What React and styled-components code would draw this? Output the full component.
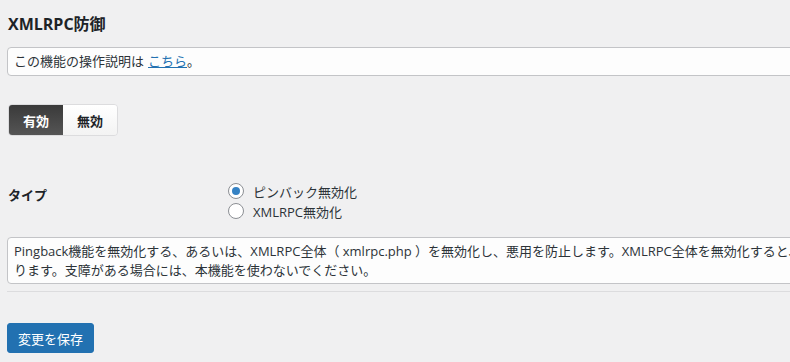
import React, { useState } from "react";
import styled, { createGlobalStyle } from "styled-components";

const GlobalStyle = createGlobalStyle`
  html, body {
    margin: 0;
    padding: 0;
    background: #f0f0f1;
    overflow: hidden;
  }
  body {
    font-family: "Open Sans", "Noto Sans CJK JP", sans-serif;
    color: #1d2327;
    font-size: 13px;
  }
`;

const Page = styled.div`
  width: 1100px;
  padding: 12px 0 0 7px;
  display: flex;
  flex-direction: column;
`;

const Title = styled.h2`
  margin: 0 0 11px 1px;
  font-size: 16px;
  line-height: 24px;
  font-weight: 700;
  color: #1d2327;
`;

const Note = styled.div`
  background: #fdfdfd;
  border: 1px solid #c3c4c7;
  border-radius: 4px;
  padding: 4px 6px;
  line-height: 19px;
  font-size: 13px;
  color: #2c3338;
`;

const Link = styled.a`
  color: #2271b1;
  text-decoration: underline;
  margin-left: 4px;
`;

const Toggle = styled.div`
  display: flex;
  margin: 28px 0 0 1px;
  align-self: flex-start;
  border-radius: 4px;
  overflow: hidden;
  border: 1px solid #dcdcde;
  height: 30px;
`;

const ToggleButton = styled.button`
  border: none;
  width: 54px;
  font-family: inherit;
  font-size: 13px;
  font-weight: 700;
  cursor: pointer;
  padding: 0;
  color: ${(p) => (p.$active ? "#fff" : "#1d2327")};
  background: ${(p) =>
    p.$active
      ? "linear-gradient(#3a3a3a, #555555)"
      : "linear-gradient(#ffffff, #f3f3f3)"};
`;

const FormRow = styled.div`
  display: flex;
  margin-top: 45px;
  align-items: flex-start;
`;

const RowLabel = styled.div`
  width: 220px;
  padding: 4px 0 0 1px;
  font-weight: 700;
  font-size: 13px;
  line-height: 20px;
`;

const RadioGroup = styled.div`
  display: flex;
  flex-direction: column;
`;

const RadioLabel = styled.label`
  display: flex;
  align-items: center;
  gap: 9px;
  height: 20px;
  font-size: 13px;
  color: #2c3338;
  cursor: pointer;
`;

const RadioCircle = styled.span`
  width: 14px;
  height: 14px;
  border: 1px solid #8c8f94;
  border-radius: 50%;
  background: #fff;
  display: flex;
  align-items: center;
  justify-content: center;
  flex-shrink: 0;
  &::after {
    content: "";
    width: 8px;
    height: 8px;
    border-radius: 50%;
    background: ${(p) => (p.$checked ? "#3582c4" : "transparent")};
  }
`;

const Description = styled(Note)`
  margin-top: 16px;
  padding: 4px 6px 3px;
`;

const Divider = styled.hr`
  border: none;
  border-top: 1px solid #dcdcde;
  margin: 7px 0 0 0;
`;

const SaveButton = styled.button`
  align-self: flex-start;
  margin-top: 31px;
  height: 30px;
  padding: 0 10px;
  border: 1px solid #2271b1;
  border-radius: 3px;
  background: #2271b1;
  color: #fff;
  font-family: inherit;
  font-size: 13px;
  cursor: pointer;
`;

export default function App() {
  const [enabled, setEnabled] = useState(true);
  const [type, setType] = useState("pingback");
  const types = [
    { id: "pingback", label: "ピンバック無効化" },
    { id: "xmlrpc", label: "XMLRPC無効化" },
  ];

  return (
    <>
      <GlobalStyle />
      <Page>
        <Title>XMLRPC防御</Title>
        <Note>
          この機能の操作説明は<Link href="#">こちら</Link>。
        </Note>
        <Toggle>
          <ToggleButton $active={enabled} onClick={() => setEnabled(true)}>
            有効
          </ToggleButton>
          <ToggleButton $active={!enabled} onClick={() => setEnabled(false)}>
            無効
          </ToggleButton>
        </Toggle>
        <FormRow>
          <RowLabel>タイプ</RowLabel>
          <RadioGroup>
            {types.map((t) => (
              <RadioLabel key={t.id} onClick={() => setType(t.id)}>
                <RadioCircle $checked={type === t.id} />
                {t.label}
              </RadioLabel>
            ))}
          </RadioGroup>
        </FormRow>
        <Description>
          Pingback機能を無効化する、あるいは、XMLRPC全体（ xmlrpc.php ）を無効化し、悪用を防止します。XMLRPC全体を無効化すると、一部のプラグインやアプリが動作しなくな
          <br />
          ります。支障がある場合には、本機能を使わないでください。
        </Description>
        <Divider />
        <SaveButton>変更を保存</SaveButton>
      </Page>
    </>
  );
}
